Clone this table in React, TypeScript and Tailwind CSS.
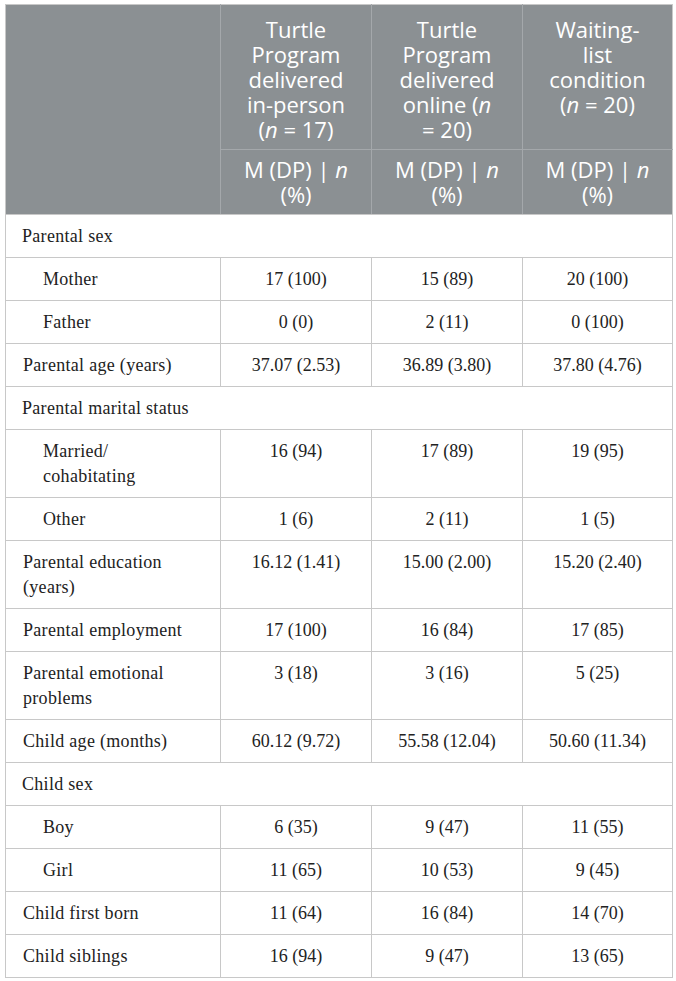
import { Fragment } from 'react'

type Row =
  | { kind: 'section'; label: string }
  | { kind: 'data'; label: string[]; indent?: boolean; values: [string, string, string] }

const ROWS: Row[] = [
  { kind: 'section', label: 'Parental sex' },
  { kind: 'data', label: ['Mother'], indent: true, values: ['17 (100)', '15 (89)', '20 (100)'] },
  { kind: 'data', label: ['Father'], indent: true, values: ['0 (0)', '2 (11)', '0 (100)'] },
  { kind: 'data', label: ['Parental age (years)'], values: ['37.07 (2.53)', '36.89 (3.80)', '37.80 (4.76)'] },
  { kind: 'section', label: 'Parental marital status' },
  { kind: 'data', label: ['Married/', 'cohabitating'], indent: true, values: ['16 (94)', '17 (89)', '19 (95)'] },
  { kind: 'data', label: ['Other'], indent: true, values: ['1 (6)', '2 (11)', '1 (5)'] },
  { kind: 'data', label: ['Parental education', '(years)'], values: ['16.12 (1.41)', '15.00 (2.00)', '15.20 (2.40)'] },
  { kind: 'data', label: ['Parental employment'], values: ['17 (100)', '16 (84)', '17 (85)'] },
  { kind: 'data', label: ['Parental emotional', 'problems'], values: ['3 (18)', '3 (16)', '5 (25)'] },
  { kind: 'data', label: ['Child age (months)'], values: ['60.12 (9.72)', '55.58 (12.04)', '50.60 (11.34)'] },
  { kind: 'section', label: 'Child sex' },
  { kind: 'data', label: ['Boy'], indent: true, values: ['6 (35)', '9 (47)', '11 (55)'] },
  { kind: 'data', label: ['Girl'], indent: true, values: ['11 (65)', '10 (53)', '9 (45)'] },
  { kind: 'data', label: ['Child first born'], values: ['11 (64)', '16 (84)', '14 (70)'] },
  { kind: 'data', label: ['Child siblings'], values: ['16 (94)', '9 (47)', '13 (65)'] },
]

const th = 'border-l border-[#a4a8ab] px-2 text-center align-top font-normal text-white'

function Lines({ lines }: { lines: string[] }) {
  return (
    <>
      {lines.map((l, i) => (
        <Fragment key={i}>
          {i > 0 && <br />}
          {l}
        </Fragment>
      ))}
    </>
  )
}

export default function App() {
  return (
    <div className="min-h-[981px] bg-white pt-[4px] pl-[5px]">
      <table
        className="w-[667px] table-fixed border-collapse border border-[#c8c8c8] text-[18px] leading-[25px] text-[#222]"
        style={{ fontFamily: '"Liberation Serif", "DejaVu Serif", serif' }}
      >
        <colgroup>
          <col className="w-[215px]" />
          <col className="w-[151px]" />
          <col className="w-[151px]" />
          <col className="w-[150px]" />
        </colgroup>
        <thead
          className="bg-[#8b9093] text-[22px] leading-[25px]"
          style={{ fontFamily: '"Open Sans", "Liberation Sans", sans-serif' }}
        >
          <tr>
            <td rowSpan={2} className="border-b border-[#c8c8c8]" />
            <th className={`${th} pt-[12px] pb-[7px]`}>
              Turtle
              <br />
              Program
              <br />
              delivered
              <br />
              in-person
              <br />(<i>n</i> = 17)
            </th>
            <th className={`${th} pt-[12px] pb-[7px]`}>
              Turtle
              <br />
              Program
              <br />
              delivered
              <br />
              online (<i>n</i>
              <br />= 20)
            </th>
            <th className={`${th} pt-[12px] pb-[7px]`}>
              Waiting-
              <br />
              list
              <br />
              condition
              <br />(<i>n</i> = 20)
            </th>
          </tr>
          <tr>
            {[0, 1, 2].map((i) => (
              <th
                key={i}
                className={`${th} border-t border-b border-b-[#c8c8c8] pt-[7px] pb-[7px]`}
              >
                M (DP) | <i>n</i>
                <br />
                (%)
              </th>
            ))}
          </tr>
        </thead>
        <tbody>
          {ROWS.map((r) =>
            r.kind === 'section' ? (
              <tr key={r.label} className="border-b border-[#c8c8c8]">
                <td colSpan={4} className="px-[16px] pt-[9px] pb-[8px] tracking-[0.3px]">
                  {r.label}
                </td>
              </tr>
            ) : (
              <tr key={r.label.join(' ')} className="border-b border-[#c8c8c8]">
                <td
                  className={`pt-[9px] pb-[8px] pr-2 align-top tracking-[0.3px] ${r.indent ? 'pl-[37px]' : 'pl-[17px]'}`}
                >
                  <Lines lines={r.label} />
                </td>
                {r.values.map((v, i) => (
                  <td
                    key={i}
                    className="border-l border-[#c8c8c8] pt-[9px] pb-[8px] text-center align-top"
                  >
                    {v}
                  </td>
                ))}
              </tr>
            ),
          )}
        </tbody>
      </table>
    </div>
  )
}
